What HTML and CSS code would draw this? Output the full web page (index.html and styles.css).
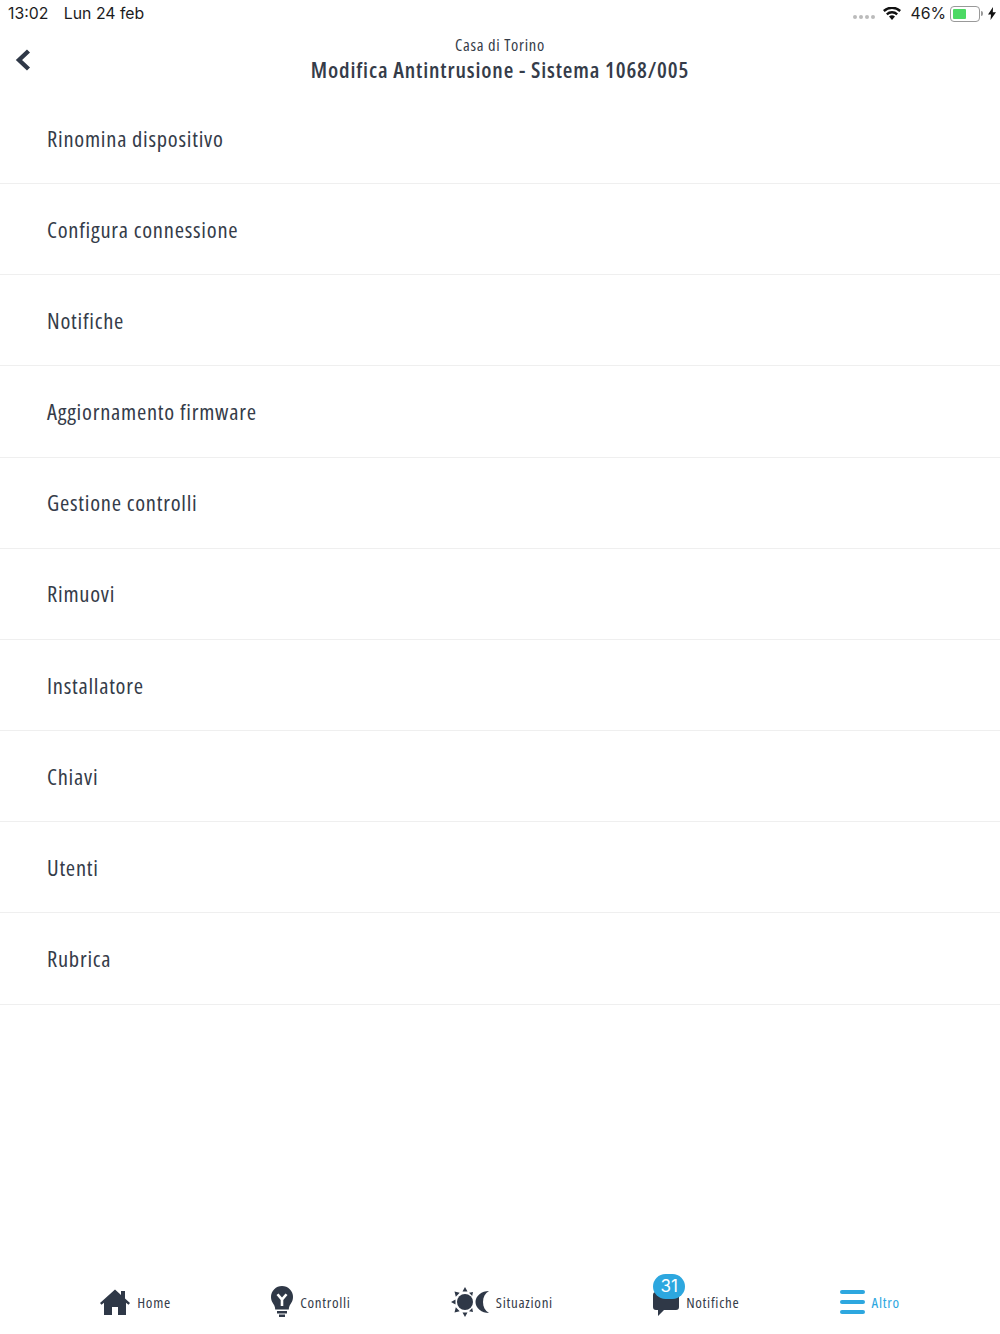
FILE: index.html
```html
<!DOCTYPE html>
<html lang="it">
<head>
	<meta charset="UTF-8"/>
	<title>Modifica Antintrusione</title>
	<link rel="stylesheet" href="styles.css">
</head>
<body>
<div class="page">
	<div class="statusbar">
		<div class="status-left"><span>13:02</span><span>Lun 24 feb</span></div>
		<div class="status-right">
			<span class="dots"><i></i><i></i><i></i><i></i></span>
			<svg class="wifi" viewBox="0 0 18 13" width="18" height="13"><path d="M9 13 6 9.6a4.4 4.4 0 0 1 6 0z"/><path d="M4.6 8.2 3 6.4a8.8 8.8 0 0 1 12 0l-1.600 1.800a6.400 6.400 0 0 0-8.800 0z"/><path d="M1.600 4.900 0 3.100a13.200 13.200 0 0 1 18 0l-1.600 1.800a10.800 10.800 0 0 0-14.800 0z"/></svg>
			<span>46%</span>
			<span class="battery"><span class="battery-level"></span></span>
			<span class="battery-tip"></span>
			<svg class="bolt" viewBox="0 0 8 13" width="8" height="13"><path d="M5 0 0 7.500h3L2.500 13 8 5.200H4.800z"/></svg>
		</div>
	</div>

	<div class="header">
		<a href="#" class="back"><svg viewBox="0 0 16 22" width="16" height="22"><path d="M13.500 2 4 11 13.500 20" fill="none" stroke="#2f3847" stroke-width="4.400"/></svg></a>
		<div class="header-sub">Casa di Torino</div>
		<div class="header-title">Modifica Antintrusione - Sistema 1068/005</div>
	</div>

	<ul class="menu">
		<li>Rinomina dispositivo</li>
		<li>Configura connessione</li>
		<li>Notifiche</li>
		<li>Aggiornamento firmware</li>
		<li>Gestione controlli</li>
		<li>Rimuovi</li>
		<li>Installatore</li>
		<li>Chiavi</li>
		<li>Utenti</li>
		<li>Rubrica</li>
	</ul>

	<div class="tabbar">
		<a href="#" class="tab">
			<svg viewBox="0 0 30 26" width="30" height="26"><path d="M15 0.500 0 14l1.500 1.800L4 13.800V26h8v-8h6v8h8V13.800l2.500 2L30 14l-5-4.500V2h-4v4z"/></svg>
			<span>Home</span>
		</a>
		<a href="#" class="tab">
			<svg viewBox="0 0 22 32" width="22" height="32"><path fill-rule="evenodd" d="M11 0a11 11 0 0 1 11 11c0 4.500-2.500 6.500-3.500 9-.5 1.200-.7 2.300-.7 3.500H4.200c0-1.200-.2-2.300-.7-3.500C2.500 17.500 0 15.500 0 11A11 11 0 0 1 11 0zM5.500 9 9.700 14v6h2.600v-6L16.500 9l-2-1.600L11 11.600 7.500 7.400z"/><path d="M6 25h10v2.500H6zM8 28.500h6V31H8z"/></svg>
			<span>Controlli</span>
		</a>
		<a href="#" class="tab">
			<svg viewBox="0 0 38 30" width="38" height="30"><circle cx="14" cy="15" r="8"/><path d="M14 0l2.500 4.500h-5zM14 30l-2.500-4.500h5zM0 15l4.500-2.500v5zM3.500 4.500l5.200 1.300-3.900 3.900zM22 5l-.8 4-3.200-3.200zM3.500 25.500l1.300-5.200 3.900 3.900zM22 25l-4-.8 3.200-3.200z"/><path d="M38 4a13.500 11 0 1 0 0 22c-4-2.500-6-6-6-11s2-8.500 6-11z"/></svg>
			<span>Situazioni</span>
		</a>
		<a href="#" class="tab tab-notify">
			<svg viewBox="0 0 26 28" width="26" height="28"><path d="M3 4h20a3 3 0 0 1 3 3v12a3 3 0 0 1-3 3H11l-6 6v-6H3a3 3 0 0 1-3-3V7a3 3 0 0 1 3-3z"/></svg>
			<span>Notifiche</span>
			<b class="badge">31</b>
		</a>
		<a href="#" class="tab tab-active">
			<svg viewBox="0 0 25 24" width="25" height="24"><rect y="0" width="25" height="4" rx="2"/><rect y="10" width="25" height="4" rx="2"/><rect y="20" width="25" height="4" rx="2"/></svg>
			<span>Altro</span>
		</a>
	</div>
</div>
</body>
</html>
```

FILE: styles.css
```css
*{
	margin:0;
	padding:0;
	box-sizing:border-box;
	text-decoration:none;
}
body{
	background-color:#fff;
	color:#353c49;
	font-family:"Open Sans","Liberation Sans",sans-serif;
	font-stretch:75%;
}
.page{
	width:1000px;
	height:1334px;
	display:flex;
	flex-direction:column;
	overflow:hidden;
}
.statusbar{
	height:27px;
	padding:0 4px 0 8px;
	display:flex;
	justify-content:space-between;
	align-items:center;
	font-family:"Inter","Liberation Sans",sans-serif;
	font-stretch:100%;
	font-size:15.800px;
	color:#1c1c1e;
}
.status-left{
	display:flex;
	gap:15.500px;
}
.status-right{
	display:flex;
	align-items:center;
}
.dots{
	display:flex;
	gap:2px;
	margin-right:8px;
	padding-top:7px;
}
.dots i{
	width:4px;
	height:4px;
	border-radius:50%;
	background:#bbb;
}
.wifi{
	fill:#111;
	margin-right:9px;
}
.battery{
	width:30px;
	height:16px;
	margin-left:4px;
	padding:2px;
	border:1px solid #999;
	border-radius:4px;
}
.battery-level{
	display:block;
	width:13px;
	height:100%;
	background:#4cd964;
	border-radius:1px;
}
.battery-tip{
	width:2px;
	height:5px;
	margin-left:1px;
	background:#999;
	border-radius:0 2px 2px 0;
}
.bolt{
	fill:#111;
	margin-left:5px;
}
.header{
	position:relative;
	height:66px;
	padding-top:8px;
	text-align:center;
}
.back{
	position:absolute;
	left:15px;
	top:22px;
}
.header-sub{
	font-size:16.500px;
	line-height:20px;
	letter-spacing:.7px;
}
.header-title{
	font-size:22px;
	line-height:28px;
	font-weight:600;
	letter-spacing:.85px;
}
.menu{
	list-style:none;
}
.menu li{
	height:91.170px;
	padding-left:47px;
	display:flex;
	align-items:center;
	font-size:22.500px;
	letter-spacing:.75px;
	border-bottom:1px solid #efefef;
}
.tabbar{
	margin-top:auto;
	height:64px;
	display:flex;
	justify-content:space-evenly;
	align-items:center;
}
.tab{
	position:relative;
	display:flex;
	align-items:center;
	gap:7px;
	font-size:15px;
	letter-spacing:.7px;
	color:#353c49;
}
.tab svg{
	fill:#2f3847;
}
.tab-active{
	color:#2da7df;
}
.tab-active svg{
	fill:#2da7df;
}
.badge{
	position:absolute;
	left:0;
	top:-14px;
	width:32px;
	height:25px;
	border-radius:13px;
	background:#2da7df;
	color:#fff;
	font-family:"Inter","Liberation Sans",sans-serif;
	font-stretch:100%;
	font-size:17px;
	font-weight:400;
	line-height:25px;
	letter-spacing:0;
	text-align:center;
}
```
